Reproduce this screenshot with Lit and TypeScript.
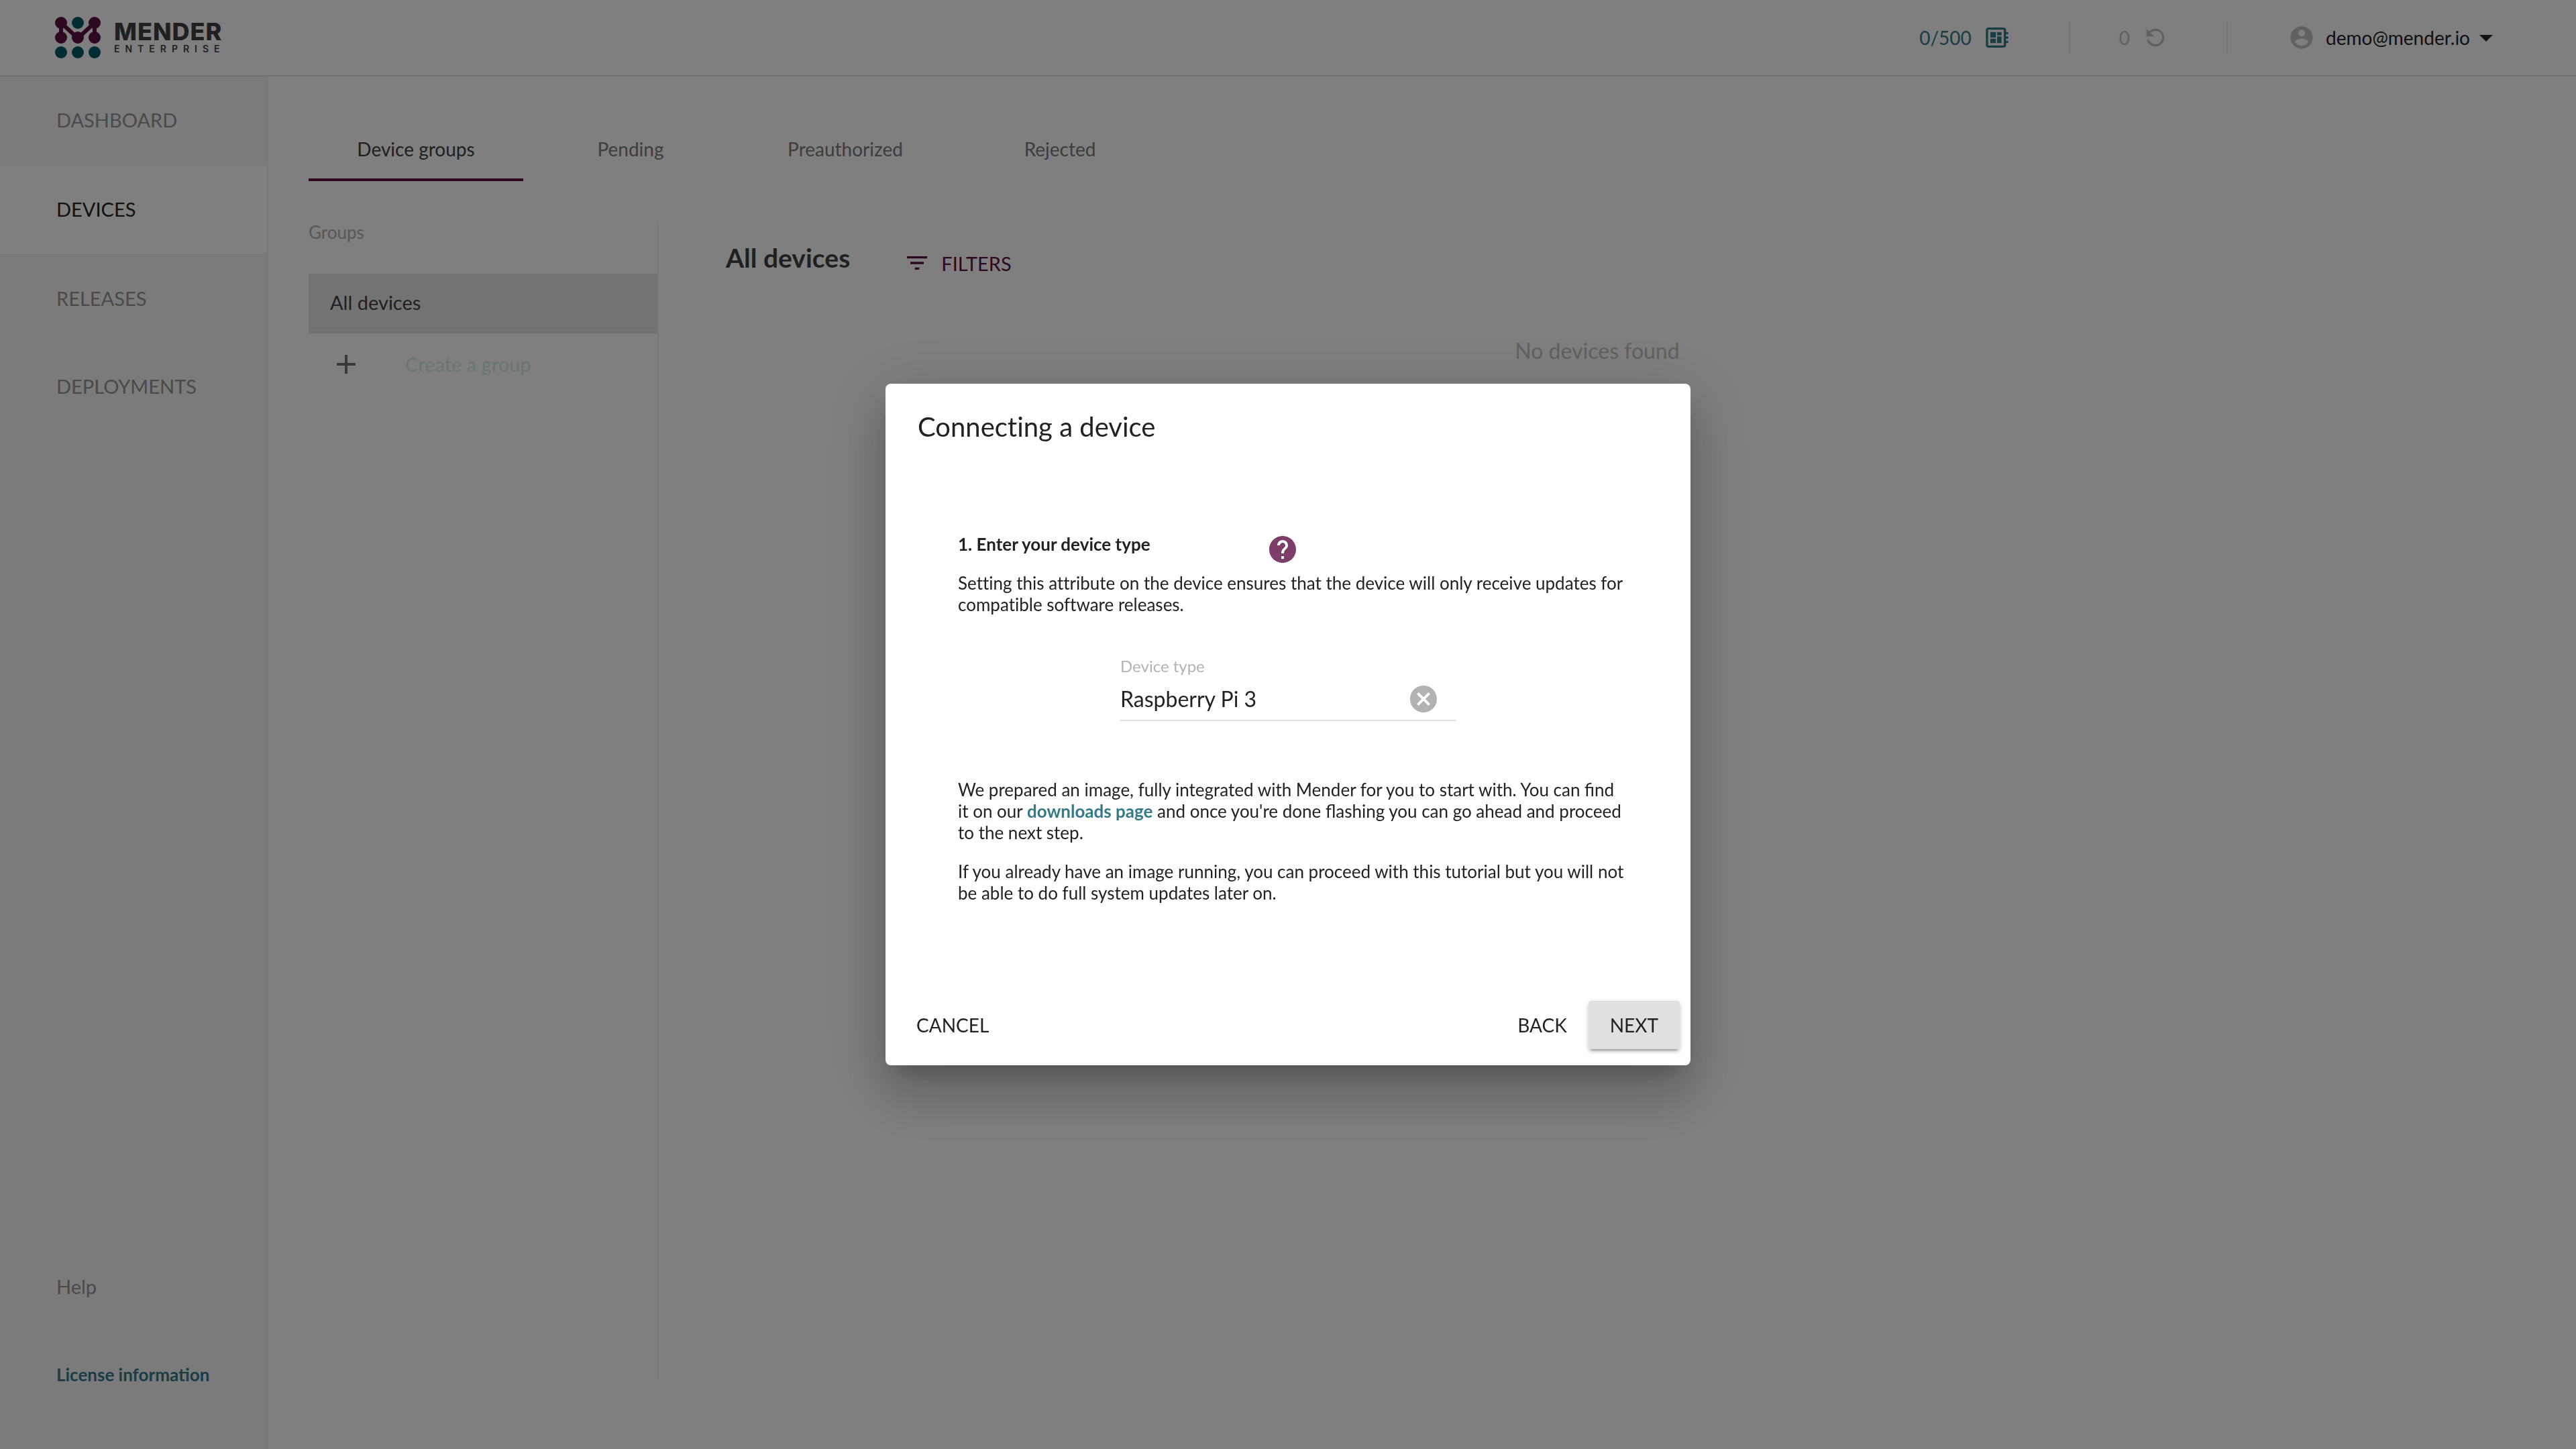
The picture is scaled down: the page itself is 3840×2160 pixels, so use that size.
import { LitElement, html, css, svg } from "lit";
import { customElement, property, state } from "lit/decorators.js";
import { classMap } from "lit/directives/class-map.js";

const icons: Record<string, string> = {
  board:
    "M22 9V7h-2V5c0-1.1-.9-2-2-2H4c-1.1 0-2 .9-2 2v14c0 1.1.9 2 2 2h14c1.1 0 2-.9 2-2v-2h2v-2h-2v-2h2v-2h-2V9h2zm-4 10H4V5h14v14zM6 13h5v4H6zm6-6h4v3h-4zM6 7h5v5H6zm6 4h4v6h-4z",
  undo:
    "M6.35 6.35C7.8 4.9 9.79 4 12 4c4.42 0 7.99 3.58 7.99 8s-3.57 8-7.99 8c-3.73 0-6.84-2.55-7.73-6h2.08c.82 2.33 3.04 4 5.65 4 3.31 0 6-2.69 6-6s-2.69-6-6-6c-1.66 0-3.14.69-4.22 1.78L11 11H4V4l2.35 2.35z",
  account:
    "M12 2C6.48 2 2 6.48 2 12s4.48 10 10 10 10-4.48 10-10S17.52 2 12 2zm0 3c1.66 0 3 1.34 3 3s-1.34 3-3 3-3-1.34-3-3 1.34-3 3-3zm0 14.2c-2.5 0-4.71-1.28-6-3.22.03-1.99 4-3.08 6-3.08 1.99 0 5.97 1.09 6 3.08-1.29 1.94-3.5 3.22-6 3.22z",
  caret: "M7 10l5 5 5-5z",
  plus: "M19 13h-6v6h-2v-6H5v-2h6V5h2v6h6v2z",
  filter: "M10 18h4v-2h-4v2zM3 6v2h18V6H3zm3 7h12v-2H6v2z",
  help:
    "M12 2C6.48 2 2 6.48 2 12s4.48 10 10 10 10-4.48 10-10S17.52 2 12 2zm1 17h-2v-2h2v2zm2.07-7.75l-.9.92C13.45 12.9 13 13.5 13 15h-2v-.5c0-1.1.45-2.1 1.17-2.83l1.24-1.26c.37-.36.59-.86.59-1.41 0-1.1-.9-2-2-2s-2 .9-2 2H8c0-2.21 1.79-4 4-4s4 1.79 4 4c0 .88-.36 1.68-.93 2.25z",
  clear:
    "M12 2C6.47 2 2 6.47 2 12s4.47 10 10 10 10-4.47 10-10S17.53 2 12 2zm5 13.59L15.59 17 12 13.41 8.41 17 7 15.59 10.59 12 7 8.41 8.41 7 12 10.59 15.59 7 17 8.41 13.41 12 17 15.59z",
};

@customElement("mender-icon")
class MenderIcon extends LitElement {
  @property() name = "";

  static styles = css`
    :host {
      display: block;
      flex: none;
      width: 40px;
      height: 40px;
    }
    .glyph {
      display: block;
      width: 100%;
      height: 100%;
      fill: currentColor;
    }
  `;

  render() {
    return html`<svg class="glyph" viewBox="0 0 24 24" aria-hidden="true">
      ${svg`<path d=${icons[this.name] ?? ""}></path>`}
    </svg>`;
  }
}

@customElement("mender-header")
class MenderHeader extends LitElement {
  static styles = css`
    :host {
      display: flex;
      align-items: center;
      justify-content: space-between;
      box-sizing: border-box;
      height: 114px;
      padding: 0 110px 0 82px;
      border-bottom: 2px solid #e0e0e0;
      background: #fff;
    }
    .brand {
      display: flex;
      align-items: center;
      gap: 20px;
      color: #404041;
      text-decoration: none;
    }
    .mark {
      display: block;
      width: 68px;
      height: 62px;
    }
    .words {
      display: flex;
      flex-direction: column;
      gap: 2px;
      font-family: Inter, "Liberation Sans", sans-serif;
    }
    .name {
      font-size: 36px;
      line-height: 32px;
      font-weight: 800;
      letter-spacing: 1px;
    }
    .edition {
      font-size: 14px;
      line-height: 16px;
      font-weight: 600;
      letter-spacing: 8px;
    }
    .tools {
      display: flex;
      align-items: center;
    }
    .tool {
      display: flex;
      align-items: center;
      height: 48px;
      gap: 18px;
      padding: 0 86px 0 72px;
      border-right: 2px solid #eaf4f3;
      color: #c3c3c3;
      text-decoration: none;
    }
    .tool.devices {
      color: #347a87;
      border-right-width: 4px;
    }
    .account {
      display: flex;
      align-items: center;
      gap: 16px;
      padding: 0 0 0 90px;
      border: 0;
      background: none;
      font: inherit;
      color: #222;
    }
    .avatar {
      color: #c3c3c3;
    }
    .who {
      display: flex;
      align-items: center;
    }
    .caret {
      width: 48px;
      height: 48px;
    }
  `;

  render() {
    return html`
      <a class="brand" href="#" aria-label="Mender Enterprise">
        <svg class="mark" viewBox="0 0 68 62" aria-hidden="true">
          <g stroke="#5d0f43" stroke-width="6" fill="none">
            <path d="M9 9V31M59 9V31M9 9L34 32L59 9"></path>
          </g>
          <g fill="#5d0f43">
            <circle cx="9" cy="9" r="9"></circle>
            <circle cx="59" cy="9" r="9"></circle>
            <circle cx="9" cy="31" r="9"></circle>
            <circle cx="34" cy="31" r="9"></circle>
            <circle cx="59" cy="31" r="9"></circle>
          </g>
          <g fill="#015969">
            <circle cx="34" cy="9" r="9"></circle>
            <circle cx="9" cy="53" r="9"></circle>
            <circle cx="34" cy="53" r="9"></circle>
            <circle cx="59" cy="53" r="9"></circle>
          </g>
        </svg>
        <span class="words">
          <span class="name">MENDER</span>
          <span class="edition">ENTERPRISE</span>
        </span>
      </a>
      <div class="tools">
        <a class="tool devices" href="#devices">0/500 <mender-icon name="board"></mender-icon></a>
        <a class="tool" href="#deployments">0 <mender-icon name="undo"></mender-icon></a>
        <button class="account" type="button">
          <mender-icon class="avatar" name="account"></mender-icon>
          <span class="who">demo@mender.io<mender-icon class="caret" name="caret"></mender-icon></span>
        </button>
      </div>
    `;
  }
}

@customElement("mender-sidebar")
class MenderSidebar extends LitElement {
  static styles = css`
    :host {
      display: flex;
      flex-direction: column;
      justify-content: space-between;
      box-sizing: border-box;
      width: 400px;
      flex: none;
      padding-bottom: 45px;
      border-right: 2px solid #eaf4f3;
      background: #f7f7f7;
      font-size: 29px;
    }
    .links {
      display: flex;
      flex-direction: column;
    }
    .link {
      display: flex;
      align-items: center;
      box-sizing: border-box;
      height: 131px;
      padding: 0 0 2px 84px;
      color: #949494;
      text-decoration: none;
    }
    .link.active {
      background: #fff;
      color: #222;
    }
    .link.lined {
      height: 133px;
      border-bottom: 2px solid #eaf4f3;
    }
    .link.license {
      font-size: 26px;
      font-weight: 700;
      color: #347a87;
    }
  `;

  render() {
    const items = ["DASHBOARD", "DEVICES", "RELEASES", "DEPLOYMENTS"];
    return html`
      <nav class="links" aria-label="Main">
        ${items.map(
          (item, i) => html`<a
            class=${classMap({ link: true, active: i === 1, lined: i < 2 })}
            href="#${item.toLowerCase()}"
            >${item}</a
          >`
        )}
      </nav>
      <nav class="links" aria-label="Support">
        <a class="link" href="#help">Help</a>
        <a class="link license" href="#license">License information</a>
      </nav>
    `;
  }
}

@customElement("mender-devices")
class MenderDevices extends LitElement {
  @state() private tab = 0;

  static styles = css`
    :host {
      display: flex;
      flex-direction: column;
      flex: 1;
      gap: 60px;
      padding: 60px;
      background: #fff;
    }
    button {
      padding: 0;
      border: 0;
      background: none;
      font: inherit;
    }
    .tabs {
      display: flex;
    }
    .tab {
      box-sizing: border-box;
      width: 320px;
      height: 96px;
      border-top: 4px solid transparent;
      border-bottom: 4px solid transparent;
      color: #7a7a7a;
    }
    .tab.selected {
      color: #404041;
      border-bottom-color: #5d0f43;
    }
    .columns {
      display: flex;
      min-height: 80vh;
    }
    .groups {
      display: flex;
      flex-direction: column;
      width: 520px;
      flex: none;
      border-right: 2px solid #f2f2f2;
    }
    .caption {
      margin: 0 0 46px;
      font-size: 26px;
      line-height: 32px;
      font-weight: 400;
      color: #b0b0b0;
    }
    .group {
      display: flex;
      align-items: center;
      box-sizing: border-box;
      height: 89px;
      padding: 0 32px;
      font-size: 29px;
      color: #404041;
    }
    .group.selected {
      padding-bottom: 2px;
      background: #e6e6e6;
      border-bottom: 2px solid #dedede;
    }
    .group.create {
      gap: 64px;
      padding-top: 2px;
      color: #d3ebe8;
    }
    .plus {
      width: 48px;
      height: 48px;
      color: #757575;
    }
    .panel {
      flex: 1;
      padding: 0 100px;
    }
    .bar {
      display: flex;
      align-items: center;
      gap: 80px;
      padding-top: 26px;
    }
    .title {
      margin: 0;
      font-size: 39px;
      line-height: 48px;
      font-weight: 700;
      color: #404041;
    }
    .filters {
      display: flex;
      align-items: center;
      gap: 16px;
      padding: 16px 0 0;
      font-size: 29px;
      color: #5d0f43;
    }
    .empty {
      margin: 91px 0 0;
      font-size: 32px;
      line-height: 40px;
      text-align: center;
      color: #c3c3c3;
    }
  `;

  render() {
    const tabs = ["Device groups", "Pending", "Preauthorized", "Rejected"];
    return html`
      <div class="tabs" role="tablist">
        ${tabs.map(
          (name, i) => html`<button
            type="button"
            role="tab"
            aria-selected=${i === this.tab}
            class=${classMap({ tab: true, selected: i === this.tab })}
            @click=${() => (this.tab = i)}
          >
            ${name}
          </button>`
        )}
      </div>
      <div class="columns">
        <section class="groups">
          <h2 class="caption">Groups</h2>
          <button class="group selected" type="button">All devices</button>
          <button class="group create" type="button">
            <mender-icon class="plus" name="plus"></mender-icon>Create a group
          </button>
        </section>
        <section class="panel">
          <div class="bar">
            <h1 class="title">All devices</h1>
            <button class="filters" type="button">
              <mender-icon name="filter"></mender-icon>FILTERS
            </button>
          </div>
          <p class="empty">No devices found</p>
        </section>
      </div>
    `;
  }
}

@customElement("mender-connect-dialog")
class MenderConnectDialog extends LitElement {
  @state() private deviceType = "Raspberry Pi 3";

  static styles = css`
    :host {
      position: fixed;
      inset: 0;
      display: flex;
      align-items: center;
      justify-content: center;
      background: rgba(0, 0, 0, 0.5);
      color: #222;
    }
    button {
      border: 0;
      background: none;
      font: inherit;
      color: inherit;
    }
    .dialog {
      box-sizing: border-box;
      width: 1200px;
      max-width: 100%;
      border-radius: 8px;
      background: #fff;
      box-shadow: 0 22px 30px -14px rgba(0, 0, 0, 0.2),
        0 48px 76px 6px rgba(0, 0, 0, 0.14),
        0 18px 92px 16px rgba(0, 0, 0, 0.12);
    }
    .unligated {
      font-variant-ligatures: no-common-ligatures;
    }
    .heading {
      margin: 0;
      padding: 32px 48px;
      font-size: 40px;
      line-height: 64px;
      font-weight: 400;
    }
    .content {
      padding: 95px 98px 129px 108px;
      font-size: 26px;
      line-height: 32px;
    }
    .step {
      display: grid;
      grid-template-columns: 460px auto;
      align-items: start;
      justify-content: start;
      height: 32px;
      margin-bottom: 26px;
    }
    .step-title {
      margin: 0;
      font-size: 26px;
      font-weight: 700;
    }
    .icon-button {
      padding: 0;
    }
    .help {
      color: #7d3f69;
    }
    .large {
      width: 48px;
      height: 48px;
    }
    .text {
      margin: 0;
    }
    .text + .text {
      margin-top: 26px;
    }
    .field {
      display: flex;
      flex-direction: column;
      gap: 4px;
      width: 500px;
      margin: 62px 0 86px 242px;
    }
    .label {
      font-size: 24px;
      line-height: 28px;
      color: #b2b2b2;
    }
    .control {
      display: flex;
      align-items: center;
      box-sizing: border-box;
      height: 64px;
      padding-right: 24px;
      border-bottom: 2px solid #e0e0e0;
    }
    .input {
      flex: 1;
      min-width: 0;
      padding: 0;
      border: 0;
      outline: 0;
      background: none;
      font: inherit;
      font-size: 32px;
      line-height: 38px;
      color: inherit;
    }
    .clear {
      color: #b2b2b2;
    }
    .download {
      font-weight: 700;
      color: #347a87;
      text-decoration: none;
    }
    .actions {
      display: flex;
      align-items: center;
      padding: 16px 16px 24px 14px;
      font-size: 28px;
    }
    .action {
      height: 72px;
      padding: 0 32px;
      border-radius: 4px;
    }
    .spacer {
      flex: 1;
    }
    .next {
      background: #e0e0e0;
      box-shadow: 0 6px 2px -4px rgba(0, 0, 0, 0.2),
        0 4px 4px 0 rgba(0, 0, 0, 0.14), 0 2px 10px 0 rgba(0, 0, 0, 0.12);
    }
  `;

  private onInput(event: Event) {
    this.deviceType = (event.target as HTMLInputElement).value;
  }

  render() {
    return html`
      <div class="dialog" role="dialog" aria-modal="true" aria-labelledby="heading">
        <h2 class="heading unligated" id="heading">Connecting a device</h2>
        <div class="content">
          <div class="step">
            <h3 class="step-title">1. Enter your device type</h3>
            <button class="icon-button help" type="button" aria-label="Help">
              <mender-icon class="large" name="help"></mender-icon>
            </button>
          </div>
          <p class="text unligated">
            Setting this attribute on the device ensures that the device will only receive updates
            for compatible software releases.
          </p>
          <div class="field">
            <label class="label" for="device-type">Device type</label>
            <div class="control">
              <input
                class="input"
                id="device-type"
                type="text"
                .value=${this.deviceType}
                @input=${this.onInput}
              />
              <button
                class="icon-button clear"
                type="button"
                aria-label="Clear"
                @click=${() => (this.deviceType = "")}
              >
                <mender-icon class="large" name="clear"></mender-icon>
              </button>
            </div>
          </div>
          <p class="text">
            We prepared an image, fully integrated with Mender for you to start with. You can find
            it on our <a class="download" href="#downloads">downloads page</a> and once you're done
            flashing you can go ahead and proceed to the next step.
          </p>
          <p class="text">
            If you already have an image running, you can proceed with this tutorial but you will
            not be able to do full system updates later on.
          </p>
        </div>
        <div class="actions">
          <button class="action" type="button">CANCEL</button>
          <span class="spacer"></span>
          <button class="action" type="button">BACK</button>
          <button class="action next" type="button">NEXT</button>
        </div>
      </div>
    `;
  }
}

@customElement("app-root")
class AppRoot extends LitElement {
  static styles = css`
    :host {
      display: flex;
      flex-direction: column;
      min-height: 100vh;
      font-family: Lato, "Liberation Sans", sans-serif;
      font-size: 28px;
      background: #fff;
    }
    .body {
      display: flex;
      flex: 1;
    }
  `;

  render() {
    return html`
      <mender-header></mender-header>
      <div class="body">
        <mender-sidebar></mender-sidebar>
        <mender-devices></mender-devices>
      </div>
      <mender-connect-dialog></mender-connect-dialog>
    `;
  }
}
